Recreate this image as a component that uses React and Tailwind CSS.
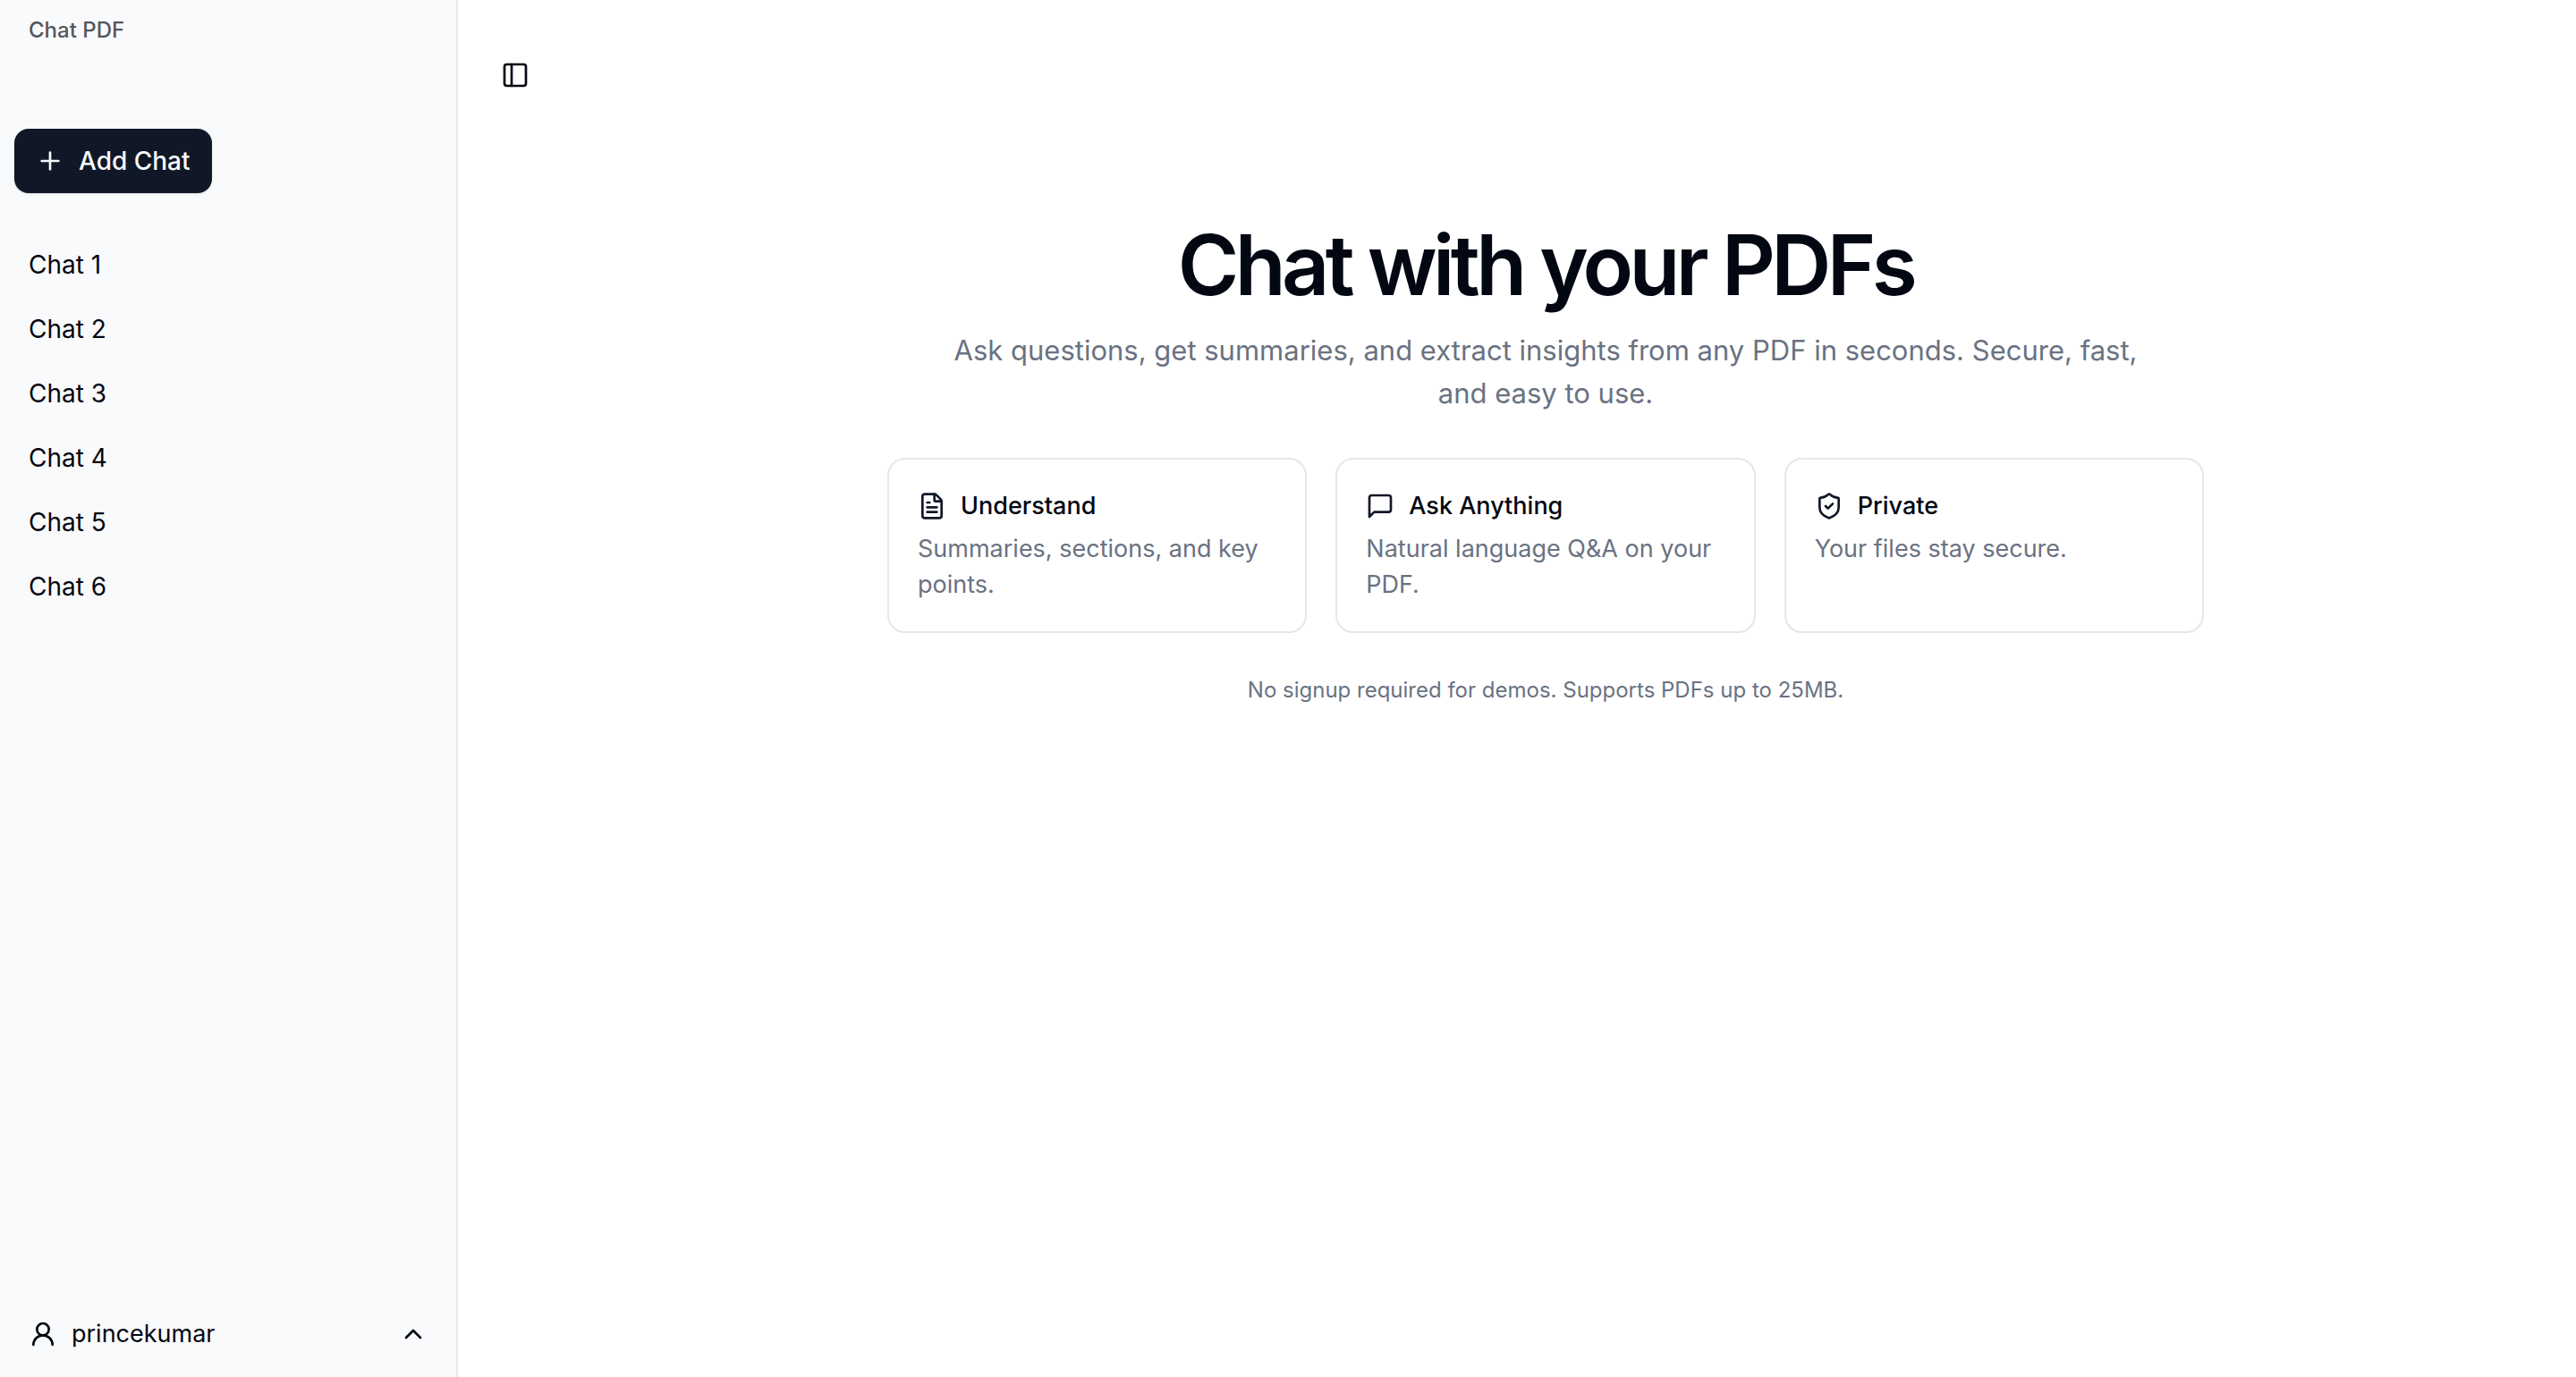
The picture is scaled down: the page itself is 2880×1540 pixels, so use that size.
import { Plus, PanelLeft, FileText, ShieldCheck, UserRound, ChevronUp } from "lucide-react";

const chats = ["Chat 1", "Chat 2", "Chat 3", "Chat 4", "Chat 5", "Chat 6"];

function SpeechBubble({ size = 32, className }) {
  return (
    <svg
      width={size}
      height={size}
      viewBox="0 0 24 24"
      fill="none"
      stroke="currentColor"
      strokeWidth="2"
      strokeLinecap="round"
      strokeLinejoin="round"
      aria-hidden="true"
      className={className}
    >
      <path d="M21 15a2 2 0 0 1-2 2H7l-4 4V5a2 2 0 0 1 2-2h14a2 2 0 0 1 2 2z" />
    </svg>
  );
}

const features = [
  { icon: FileText, title: "Understand", text: "Summaries, sections, and key points." },
  { icon: SpeechBubble, title: "Ask Anything", text: "Natural language Q&A on your PDF." },
  { icon: ShieldCheck, title: "Private", text: "Your files stay secure." },
];

function Sidebar() {
  return (
    <aside className="flex w-128 shrink-0 flex-col border-r-2 border-gray-200 bg-[#f9fafc]">
      <h2 className="flex h-17 items-center px-8 text-2xl font-medium text-[#55565d]">Chat PDF</h2>
      <div className="mt-19 px-4">
        <button className="flex h-18 items-center gap-4 rounded-2xl bg-gray-900 px-6 text-[28px] font-medium text-gray-50 shadow-sm">
          <Plus size={32} />
          Add Chat
        </button>
      </div>
      <nav className="mt-12 flex flex-1 flex-col gap-2 px-4 text-[28px]">
        {chats.map((chat) => (
          <a key={chat} href="#" className="flex h-16 items-center rounded-xl px-4">{chat}</a>
        ))}
      </nav>
      <button className="m-4 flex h-16 items-center gap-4 rounded-xl px-4 text-left">
        <UserRound size={32} />
        <span className="flex-1">princekumar</span>
        <ChevronUp size={32} />
      </button>
    </aside>
  );
}

export default function App() {
  return (
    <div className="flex min-h-screen bg-white font-['Inter',sans-serif] text-[27px] leading-10 text-gray-950">
      <Sidebar />
      <main className="flex flex-1 items-start">
        <button aria-label="Toggle sidebar" className="mt-14 -mr-7 ml-9 flex size-14 shrink-0 items-center justify-center rounded-xl">
          <PanelLeft size={32} />
        </button>
        <section className="flex flex-1 justify-center px-8 pt-62">
          <div className="flex max-w-368 flex-1 flex-col items-center">
            <h1 className="text-[93px] leading-24 font-semibold tracking-tighter">Chat with your PDFs</h1>
            <p className="mt-6 max-w-336 text-center text-[31px] leading-12 text-gray-500">
              Ask questions, get summaries, and extract insights from any PDF in seconds. Secure, fast, and easy to use.
            </p>
            <div className="mt-12 grid w-full grid-cols-3 gap-8">
              {features.map(({ icon: Icon, title, text }) => (
                <article key={title} className="rounded-[20px] border-2 border-gray-200 p-8">
                  <h3 className="flex items-center gap-4 font-medium">
                    <Icon size={32} className="text-gray-900" />
                    {title}
                  </h3>
                  <p className="mt-2 text-gray-500">{text}</p>
                </article>
              ))}
            </div>
            <p className="mt-12 text-2xl text-gray-500">No signup required for demos. Supports PDFs up to 25MB.</p>
          </div>
        </section>
      </main>
    </div>
  );
}
